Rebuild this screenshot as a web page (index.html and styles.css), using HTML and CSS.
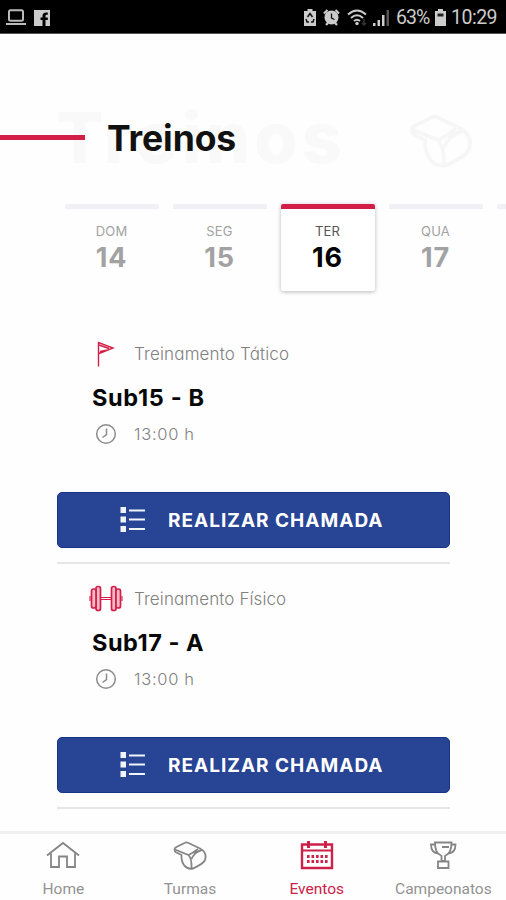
FILE: index.html
```html
<!DOCTYPE html>
<html lang="pt-BR">
<head>
<meta charset="utf-8">
<title>Treinos</title>
<link rel="stylesheet" href="styles.css">
</head>
<body>
<svg width="0" height="0" class="defs">
  <symbol id="whistle" viewBox="0 0 34 29">
    <path d="M1.500 8.500Q1.500 7 3 6.200L12 1.800Q13.500 1 15 1.800L27 7.500C32 10 33.500 14 32 19 30 23 25 25 20 27.500 13 29 8 23 8.500 14L2.500 11Q1.500 10.300 1.500 8.500Z"/>
    <path d="M2 8.500 15.500 14 20 11.500 24 11 29 9M20 11.500l5-3.500"/>
    <path d="M15.500 14Q19 18 18.500 27.500M18.500 18Q21 12 28 9"/>
  </symbol>
  <symbol id="clock" viewBox="0 0 22 22"><circle cx="11" cy="11" r="9.3"/><path d="M11.500 5.500v6l-4 3"/></symbol>
  <symbol id="list" viewBox="0 0 26 26">
    <path class="solid" d="M.5 0h5.500v6H.5ZM.5 9.500h5.500v6H.5ZM.5 19h5.500v6H.5Z"/>
    <path d="M9 3.500h16M9 12.500h16M9 22h16"/>
  </symbol>
</svg>
<div class="screen">
  <div class="status">
    <svg class="st-laptop" width="20" height="17" viewBox="0 0 20 17"><rect x="3" y="1.200" width="14" height="10.500" rx="1.500" fill="none" stroke="#bbb" stroke-width="2"/><path d="M0 14h20v2H0Z" fill="#bbb"/></svg>
    <svg class="st-fb" width="16" height="16" viewBox="0 0 16 16"><path d="M0 0h16v16h-4.500v-6h2.300V7.500h-2.300V6c0-1 .5-1.200 2.300-1.200V2.500C10 2 8.500 3.500 8.500 5.500v2H6.500V10h2v6H0Z" fill="#ccc"/></svg>
    <span class="spacer"></span>
    <svg class="st-recycle" width="12" height="17" viewBox="0 0 12 17"><path d="M3.500 0h5v2H12v15H0V2h3.500Z" fill="#ccc"/><path d="m3.500 8 2.500-3.500L8.500 8M2 10l1 3h2M10 10l-1 3H7" fill="none" stroke="#111" stroke-width="1.500"/></svg>
    <svg class="st-alarm" width="17" height="17" viewBox="0 0 17 17"><circle cx="8.500" cy="8.500" r="7" fill="#ccc"/><path d="M1 4.500 4.500 1M16 4.500 12.500 1M3 16l2-2M14 16l-2-2" stroke="#ccc" stroke-width="2.200"/><path d="M8.500 4.500v4.500l3 1.500" fill="none" stroke="#111" stroke-width="1.300"/></svg>
    <svg class="st-wifi" width="21" height="17" viewBox="0 0 21 17"><path d="M1 5.500q9-8 18 0M4 9q6-5.500 12 0M7 12q3-2.500 6 0" fill="none" stroke="#ccc" stroke-width="2"/><circle cx="10" cy="14.500" r="1.700" fill="#ccc"/><path d="m17 10v6m-2-2 2 2 2-2" fill="none" stroke="#333" stroke-width="1.500"/></svg>
    <svg class="st-signal" width="16" height="16" viewBox="0 0 16 16"><path d="M0 13h2.500v3H0ZM4.500 10H7v6H4.500ZM9 5h2.500v11H9Z" fill="#ccc"/><path d="M13.500 0H16v16h-2.500Z" fill="#555"/></svg>
    <span class="pct">63%</span>
    <svg class="st-batt" width="11" height="17" viewBox="0 0 11 17"><path d="M3 0h5v2h3v15H0V2h3Z" fill="#ccc"/><path d="M2.500 4.500h6v3h-6Z" fill="#222"/></svg>
    <span class="time">10:29</span>
  </div>

  <header class="head">
    <span class="ghost" aria-hidden="true">Treinos</span>
    <span class="rule"></span>
    <h1>Treinos</h1>
    <svg class="ghost-whistle" width="64" height="54"><use href="#whistle"/></svg>
  </header>

  <div class="days">
    <div class="day"><span class="dow">DOM</span><b>14</b></div>
    <div class="day"><span class="dow">SEG</span><b>15</b></div>
    <div class="day active"><span class="dow">TER</span><b>16</b></div>
    <div class="day"><span class="dow">QUA</span><b>17</b></div>
    <div class="day"></div>
  </div>

  <main>
    <section class="item">
      <div class="row kind">
        <svg class="ico red" width="34" height="28" viewBox="0 0 34 28"><path d="M9.500 26.500V2.500L24 8 10 13.500M10 5 20 8.500M11 11.500l8-1.500" stroke-width="1.400"/></svg>
        <span class="k1">Treinamento Tático</span>
      </div>
      <h2 class="t1">Sub15 - B</h2>
      <div class="row hour"><svg class="ico grey" width="22" height="22"><use href="#clock"/></svg><span>13:00 h</span></div>
      <button><svg class="list" width="26" height="26"><use href="#list"/></svg><span>REALIZAR CHAMADA</span></button>
    </section>
    <section class="item">
      <div class="row kind">
        <svg class="ico red" width="34" height="28" viewBox="0 0 34 28"><g fill="#f7b9c7" stroke-width="1.700"><rect x="7" y="1.500" width="4.500" height="24" rx="2"/><rect x="22.500" y="1.500" width="4.500" height="24" rx="2"/><rect x="2.500" y="4" width="4.500" height="19" rx="2"/><rect x="27" y="4" width="4.500" height="19" rx="2"/></g><path d="M1 11v5M33 11v5M12 12.500h10M12 14.500h10" stroke-width="1.100"/></svg>
        <span class="k2">Treinamento Físico</span>
      </div>
      <h2 class="t2">Sub17 - A</h2>
      <div class="row hour"><svg class="ico grey" width="22" height="22"><use href="#clock"/></svg><span>13:00 h</span></div>
      <button><svg class="list" width="26" height="26"><use href="#list"/></svg><span>REALIZAR CHAMADA</span></button>
    </section>
  </main>

  <nav>
    <a class="tab"><svg width="34" height="29" viewBox="0 0 34 29"><path d="M1 14.500 17 2l16 12.500M5 12.500v13.500h8V15.500h8v10.500h8V12.500"/></svg><span>Home</span></a>
    <a class="tab"><svg width="34" height="29"><use href="#whistle"/></svg><span>Turmas</span></a>
    <a class="tab on"><svg width="34" height="29" viewBox="0 0 34 29"><path d="M2 3.500h30v23.500H2Z" stroke-width="2.400"/><path d="M2 9.500h30" stroke-width="2"/><path d="M8.500 0v7M25.500 0v7" stroke-width="3"/><path d="M7 15.500h21M7 20.500h21" stroke-width="2.800" stroke-dasharray="2.600 1.900"/></svg><span>Eventos</span></a>
    <a class="tab"><svg width="34" height="29" viewBox="0 0 34 29"><path d="M9 1.500h16.500c0 8-2 11-6.500 13.500v5h-3.500v-5C11 12.500 9 9.500 9 1.500ZM9 3.500H5c0 5 2 8.500 7 9M25.500 3.500h4c0 5-2 8.500-7 9M12 20.500h10.500v6.500H12ZM16 6h7"/></svg><span>Campeonatos</span></a>
  </nav>
</div>
</body>
</html>
```
FILE: styles.css
```css
* { box-sizing: border-box; }
body { margin: 0; background: #fff; font-family: Inter, "Liberation Sans", sans-serif; font-feature-settings: "cv11"; }
h1, h2 { margin: 0; }
.defs { position: absolute; }
.screen { width: 506px; height: 900px; display: flex; flex-direction: column; overflow: hidden; background: #fefefe; }
svg { flex: none; display: block; }

.status { height: 34px; flex: none; background: #000; border-bottom: 1px solid #555; display: flex; align-items: center; padding: 2px 9px 0 6px; font-family: Roboto, sans-serif; font-size: 19.5px; color: #ccc; }
.st-fb { margin-left: 8px; }
.spacer { flex: 1; }
.st-alarm { margin-left: 7px; }
.st-wifi { margin-left: 7px; }
.st-signal { margin-left: 5px; }
.pct { width: 34px; margin-left: 7px; letter-spacing: -1px; white-space: nowrap; }
.st-batt { margin-left: 5px; }
.time { width: 46px; margin-left: 5px; letter-spacing: -.5px; white-space: nowrap; }

.head { position: relative; height: 170px; flex: none; display: flex; align-items: center; padding-top: 37px; }
.rule { position: relative; width: 85px; height: 5px; background: #d31f48; }
.head h1 { position: relative; margin-left: 22px; margin-top: 2px; font-size: 35.5px; line-height: 40px; color: #111; letter-spacing: -.1px; }
.ghost { position: absolute; left: 56px; top: 62px; font-size: 70px; line-height: 84px; font-weight: 800; letter-spacing: 4.2px; color: #f9f9f9; }
.ghost-whistle { margin-left: auto; margin-right: 33px; margin-top: 7px; fill: none; stroke: #f6f6f6; stroke-width: 2; }

.days { display: flex; gap: 14px; padding-left: 64.5px; height: 90px; flex: none; }
.day { width: 94px; flex: none; height: 87px; border-top: 5px solid #f0f0f6; display: flex; flex-direction: column; align-items: center; padding-top: 13px; color: #a2a2a2; border-radius: 2px; }
.dow { font-size: 13px; line-height: 18px; letter-spacing: .2px; }
.day b { font-size: 27px; line-height: 35px; letter-spacing: .8px; }
.day.active { border-top-color: #d31f48; background: #fff; color: #000; box-shadow: 0 1px 4px rgba(0,0,0,.28); }
.active .dow { color: #555; }

main { padding: 43px 56px 0 57px; flex: 1; }
.item { height: 245px; display: flex; flex-direction: column; }
.item::after { content: ""; height: 2px; margin-top: 14px; background: #e6e6e6; flex: none; }
.row { display: flex; align-items: center; color: #808080; font-weight: 300; }
.ico { fill: none; }
.red { stroke: #d31f48; }
.grey { stroke: #8b8b8b; stroke-width: 1.5; }
.kind { height: 34px; padding-left: 32px; gap: 11px; font-size: 17px; }
.k1 { letter-spacing: .15px; }
.k2 { letter-spacing: .1px; }
.item h2 { padding-left: 35px; margin-top: 10px; font-size: 23.5px; line-height: 34px; color: #080808; white-space: nowrap; letter-spacing: .65px; }
.item .t2 { letter-spacing: .5px; }
.hour { height: 30px; margin-top: 4px; padding-left: 38px; gap: 17px; font-size: 16.5px; letter-spacing: .7px; }
button { width: 393px; height: 56px; flex: none; margin-top: 43px; border: 1px solid #173487; border-radius: 5px; background: #284494; color: #fff; display: flex; align-items: center; padding: 0 0 0 62px; gap: 22px; font: 700 19px Inter, sans-serif; letter-spacing: 1px; }
.list { fill: none; stroke: #f2f4fb; stroke-width: 2.2; }
.solid { fill: #f2f4fb; stroke: none; }

nav { height: 69px; flex: none; border-top: 3px solid #f0f0f0; display: grid; grid-template-columns: repeat(4, 126.7px); padding-top: 7px; background: #fefefe; }
.tab { display: flex; flex-direction: column; align-items: center; gap: 9px; font: 400 15.5px/20px Roboto, sans-serif; color: #929292; }
.tab svg { fill: none; stroke: #858585; stroke-width: 1.8; }
.tab.on { color: #cc2149; }
.tab.on svg { stroke: #cc2149; }
```
